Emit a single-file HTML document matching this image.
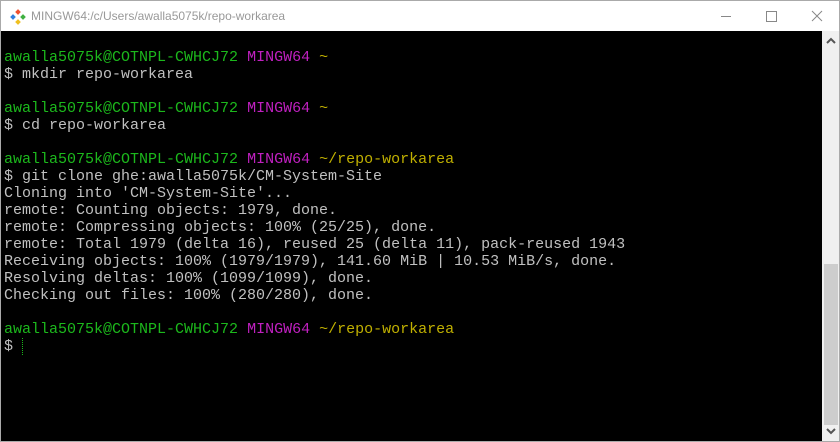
<!DOCTYPE html>
<html><head><style>
html,body{margin:0;padding:0;width:840px;height:442px;overflow:hidden;background:#fff;}
.win{position:absolute;left:0;top:0;width:838px;height:440px;border:1px solid #aaa;background:#fff;}
.title{position:absolute;left:0;top:0;width:838px;height:30px;background:#fff;}
.title .t{position:absolute;left:30px;top:8px;font:12px "Liberation Sans",sans-serif;color:#999;}
.term{position:absolute;left:0;top:30px;width:821px;height:410px;background:#000;}
pre{margin:0;position:absolute;left:3px;top:18px;font:15px/17px "Liberation Mono",monospace;color:#c0c0c0;letter-spacing:0;}
.g{color:#1cb81c}.m{color:#c020c0}.y{color:#c0b000}
.sb{position:absolute;left:821px;top:30px;width:17px;height:410px;background:#f0f0f0;}
.thumb{position:absolute;left:2px;top:233px;width:14px;height:161px;background:#cdcdcd;}
</style></head><body>
<div class="win">
<div class="title">
<svg style="position:absolute;left:9px;top:8px" width="16" height="16" viewBox="0 0 16 16">
<rect x="6" y="1" width="4" height="4" transform="rotate(45 8 3)" fill="#f05030"/>
<rect x="1" y="6" width="4" height="4" transform="rotate(45 3 8)" fill="#3080e0"/>
<rect x="11" y="6" width="4" height="4" transform="rotate(45 13 8)" fill="#40b040"/>
<rect x="6" y="11" width="4" height="4" transform="rotate(45 8 13)" fill="#f0c020"/>
</svg>
<div class="t">MINGW64:/c/Users/awalla5075k/repo-workarea</div>
<div style="position:absolute;left:720px;top:15px;width:10px;height:1px;background:#888"></div>
<div style="position:absolute;left:765px;top:10px;width:9px;height:9px;border:1px solid #888"></div>
<svg style="position:absolute;left:810px;top:9px" width="12" height="12"><path d="M1 1L11 11M11 1L1 11" stroke="#888" stroke-width="1"/></svg>
</div>
<div class="term"><pre><span class="g">awalla5075k@COTNPL-CWHCJ72</span> <span class="m">MINGW64</span> <span class="y">~</span>
$ mkdir repo-workarea

<span class="g">awalla5075k@COTNPL-CWHCJ72</span> <span class="m">MINGW64</span> <span class="y">~</span>
$ cd repo-workarea

<span class="g">awalla5075k@COTNPL-CWHCJ72</span> <span class="m">MINGW64</span> <span class="y">~/repo-workarea</span>
$ git clone ghe:awalla5075k/CM-System-Site
Cloning into 'CM-System-Site'...
remote: Counting objects: 1979, done.
remote: Compressing objects: 100% (25/25), done.
remote: Total 1979 (delta 16), reused 25 (delta 11), pack-reused 1943
Receiving objects: 100% (1979/1979), 141.60 MiB | 10.53 MiB/s, done.
Resolving deltas: 100% (1099/1099), done.
Checking out files: 100% (280/280), done.

<span class="g">awalla5075k@COTNPL-CWHCJ72</span> <span class="m">MINGW64</span> <span class="y">~/repo-workarea</span>
$ <span style="border-left:1px dotted #1cb81c"> </span></pre></div>
<div class="sb"><div class="thumb"></div>
<svg style="position:absolute;left:4px;top:6px" width="10" height="8"><path d="M1 6L5 2L9 6" stroke="#555" stroke-width="2" fill="none"/></svg>
<svg style="position:absolute;left:4px;top:396px" width="10" height="8"><path d="M1 2L5 6L9 2" stroke="#555" stroke-width="2" fill="none"/></svg>
</div>
</div>
</body></html>
